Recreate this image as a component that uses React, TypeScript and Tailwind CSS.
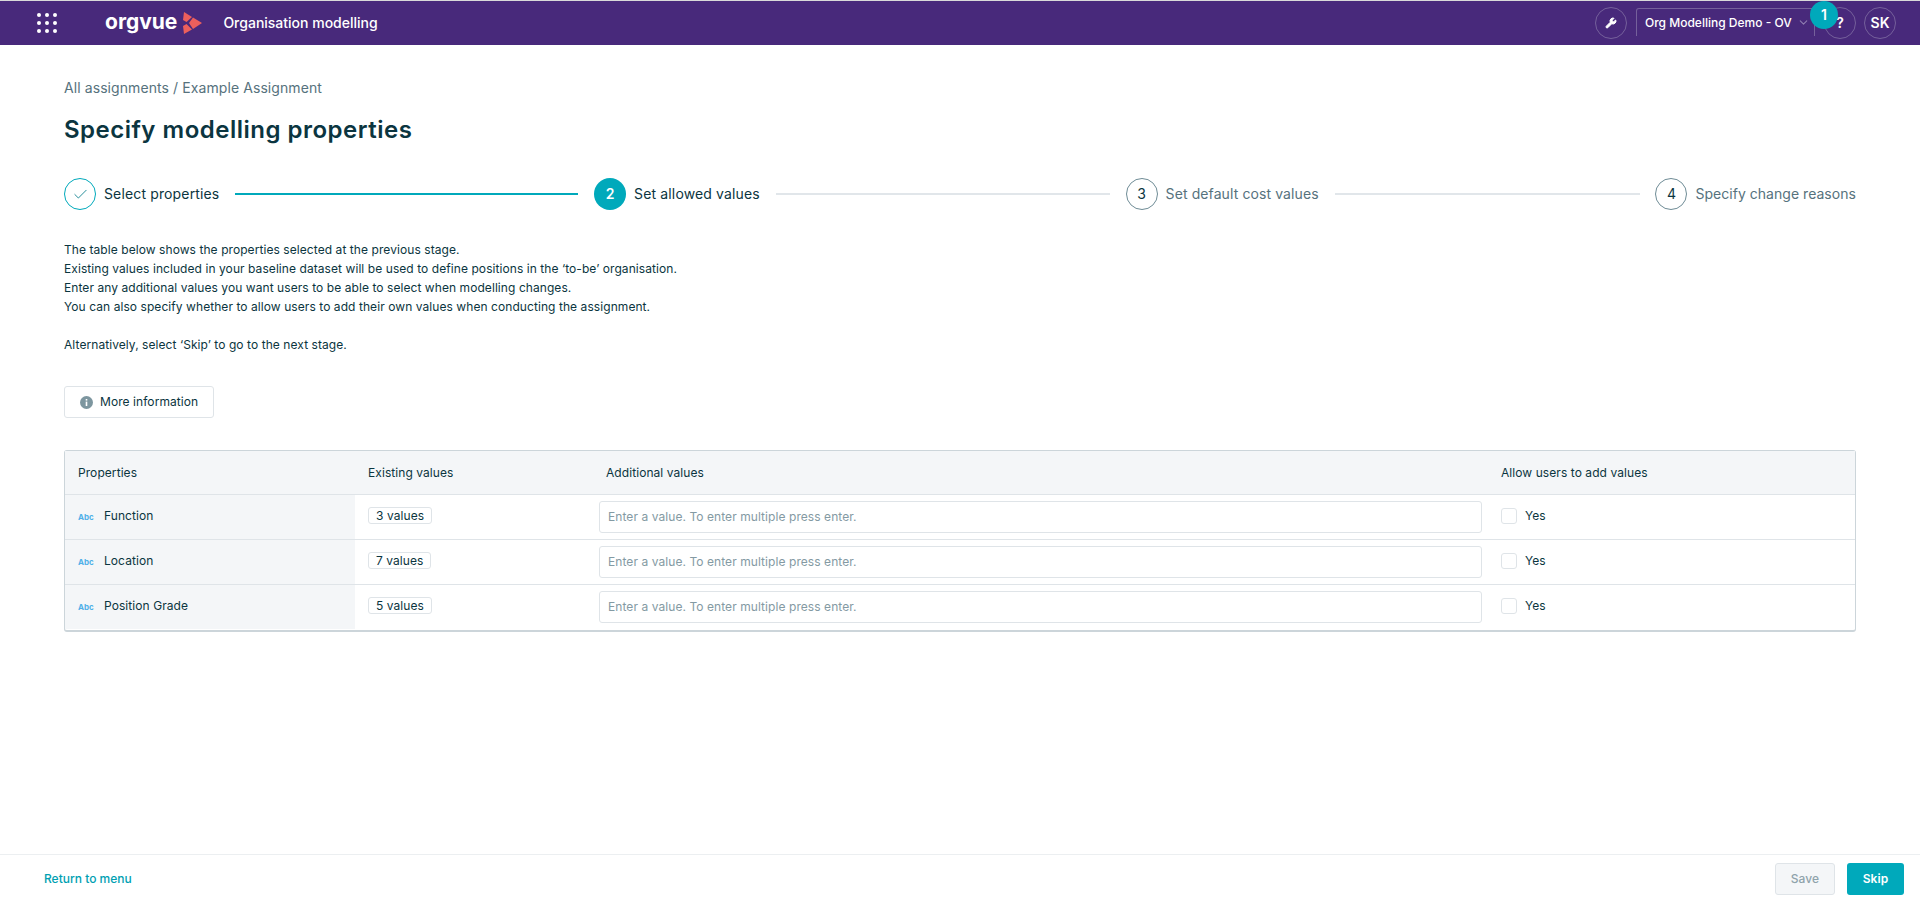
import React from 'react';
import { Check, ChevronDown, Wrench } from 'lucide-react';

const rows = [
	{ name: 'Function', count: '3 values' },
	{ name: 'Location', count: '7 values' },
	{ name: 'Position Grade', count: '5 values' },
];

const GridDots = () => (
	<div className="grid grid-cols-3 gap-1">
		{[1, 2, 3, 4, 5, 6, 7, 8, 9].map((item) => (
			<span key={item} className="h-1 w-1 rounded-full bg-white" />
		))}
	</div>
);

const LogoMark = () => (
	<svg width="21" height="22" viewBox="0 0 21 22" className="ml-[4px] shrink-0">
		<path d="M3 0 L11 5 L5.5 10 L2 8 Z" fill="#ec5f5c" />
		<path d="M12 5.5 L21 11 L12 17 L8 11 Z" fill="#ec5f5c" />
		<path d="M2 14 L5.5 12 L11 17.5 L3 22 Z" fill="#ec5f5c" />
	</svg>
);

const InfoDot = () => (
	<svg width="13" height="13" viewBox="0 0 13 13" className="shrink-0">
		<circle cx="6.5" cy="6.5" r="6.5" fill="#7d969f" />
		<rect x="5.7" y="5.6" width="1.6" height="4.4" fill="white" />
		<rect x="5.7" y="3" width="1.6" height="1.6" fill="white" />
	</svg>
);

const Step = ({ n, label, state, labelClass }: { n: React.ReactNode; label: string; state: 'done' | 'active' | 'todo'; labelClass: string }) => (
	<div className="flex items-center gap-2 shrink-0">
		<div
			className={
				state === 'active'
					? 'flex h-8 w-8 items-center justify-center rounded-full bg-[#00a9bb] text-sm font-semibold text-white'
					: state === 'done'
						? 'flex h-8 w-8 items-center justify-center rounded-full border border-[#00a9bb] text-[#0b7f8e]'
						: 'flex h-8 w-8 items-center justify-center rounded-full border border-[#6f8c96] text-sm text-[#0b3540]'
			}
		>
			{n}
		</div>
		<span className={labelClass}>{label}</span>
	</div>
);

export default function App() {
	return (
		<div className="flex h-[902px] flex-col overflow-hidden bg-white font-['Inter',sans-serif] text-xs tracking-[0.07px] text-[#0b3540]">
			<div className="h-px bg-[#d9d9d9]" />
			<header className="flex h-[44px] items-center bg-[#48297b] pl-[37px] pr-[24px] text-white">
				<GridDots />
				<span className="ml-[48px] pb-[3px] text-[21px] leading-none font-bold tracking-normal">orgvue</span>
				<LogoMark />
				<span className="ml-[21px] text-sm font-medium tracking-normal">Organisation modelling</span>
				<div className="ml-auto flex items-center">
					<div className="flex h-8 w-8 items-center justify-center rounded-full border border-[#75609b]">
						<Wrench size={12} fill="white" strokeWidth={2} />
					</div>
					<div className="relative mb-[2px] ml-[9px] flex h-[28px] w-[179px] items-center rounded-t-[3px] border border-b-0 border-[#75609b] pl-2">
						<span className="text-xs font-medium tracking-normal whitespace-nowrap">Org Modelling Demo - OV</span>
						<ChevronDown size={13} className="ml-[5px] text-[#8e7cb0]" />
						<span className="absolute -right-[24px] -top-[8px] flex h-7 w-7 items-center justify-center rounded-full bg-[#00a9bb] text-sm font-semibold">1</span>
					</div>
					<div className="ml-[9px] flex h-8 w-8 items-center justify-center rounded-full border border-[#75609b] text-sm font-semibold">?</div>
					<div className="ml-2 flex h-8 w-8 items-center justify-center rounded-full border border-[#75609b] text-sm font-semibold">SK</div>
				</div>
			</header>

			<main className="flex-1 px-16 pt-[34px]">
				<div className="text-sm leading-[18px] tracking-[0.085px] text-[#56727d]">All assignments / Example Assignment</div>
				<h1 className="mt-[17px] text-2xl leading-[32px] font-semibold tracking-[0.5px] text-[#0b3540]">Specify modelling properties</h1>

				<div className="mt-[32px] flex items-center justify-between">
					<Step n={<Check size={17} strokeWidth={1.25} />} label="Select properties" state="done" labelClass="text-sm tracking-[0.14px] text-[#0b3540]" />
					<div className="h-0.5 w-[343px] bg-[#00a9bb]" />
					<Step n="2" label="Set allowed values" state="active" labelClass="text-sm tracking-[0.14px] text-[#0b3540]" />
					<div className="h-0.5 w-[334px] bg-[#e1e6ea]" />
					<Step n="3" label="Set default cost values" state="todo" labelClass="text-sm tracking-[0.1px] text-[#56727d]" />
					<div className="h-0.5 w-[305px] bg-[#e1e6ea]" />
					<Step n="4" label="Specify change reasons" state="todo" labelClass="text-sm tracking-[0.03px] text-[#56727d]" />
				</div>

				<div className="mt-[30px] leading-[19px]">
					<p>The table below shows the properties selected at the previous stage.</p>
					<p>Existing values included in your baseline dataset will be used to define positions in the ‘to-be’ organisation.</p>
					<p>Enter any additional values you want users to be able to select when modelling changes.</p>
					<p>You can also specify whether to allow users to add their own values when conducting the assignment.</p>
					<p className="mt-[19px]">Alternatively, select ‘Skip’ to go to the next stage.</p>
				</div>

				<button className="mt-[32px] flex h-[32px] w-[150px] items-center gap-[7px] rounded-[3px] border border-[#dfe4e8] pl-[15px] text-xs text-[#0b3540]">
					<InfoDot />
					More information
				</button>

				<div className="mt-[32px] rounded-[3px] border border-b-2 border-[#ccd5da]">
					<div className="flex h-[44px] items-center border-b border-[#dfe4e8] bg-[#f4f6f8]">
						<div className="w-[290px] pl-[13px]">Properties</div>
						<div className="w-[238px] pl-[13px]">Existing values</div>
						<div className="w-[896px] pl-[13px]">Additional values</div>
						<div className="pl-[12px]">Allow users to add values</div>
					</div>
					{rows.map((row, i) => (
						<div key={row.name} className={i < 2 ? 'flex h-[45px] items-center border-b border-[#dfe4e8]' : 'flex h-[45px] items-center border-b border-transparent'}>
							<div className="flex h-full w-[290px] items-center bg-[#f4f6f8] pb-[2px] pl-[13px]">
								<span className="w-[26px] pt-[2px] text-[8px] font-bold tracking-normal text-[#4fb0e8]">Abc</span>
								{row.name}
							</div>
							<div className="w-[238px] pb-[3px] pl-[13px]">
								<span className="inline-block rounded-[3px] border border-[#dfe4e8] px-[7px] leading-[15px]">{row.count}</span>
							</div>
							<div className="w-[896px] pb-[1px] pl-[6px] pr-[7px]">
								<input
									readOnly
									placeholder="Enter a value. To enter multiple press enter."
									className="h-[32px] w-full rounded-[3px] border border-[#dfe4e8] px-2 text-xs outline-none placeholder:text-[#849aa3]"
								/>
							</div>
							<div className="flex items-center gap-2 pb-[2px] pl-[12px]">
								<span className="h-4 w-4 rounded-[3px] border border-[#dfe4e8]" />
								Yes
							</div>
						</div>
					))}
				</div>
			</main>

			<footer className="flex h-[48px] items-center justify-between border-t border-[#eceff1] pl-[44px] pr-[16px]">
				<a className="text-xs font-medium tracking-normal text-[#00a0b2]">Return to menu</a>
				<div className="flex items-center gap-3">
					<button className="h-8 w-[60px] rounded-[3px] border border-[#dfe4e8] bg-[#f4f6f8] text-xs font-medium text-[#8fa3ab]">Save</button>
					<button className="h-8 w-[57px] rounded-[3px] bg-[#00a9bb] text-xs font-semibold text-white">Skip</button>
				</div>
			</footer>
		</div>
	);
}
